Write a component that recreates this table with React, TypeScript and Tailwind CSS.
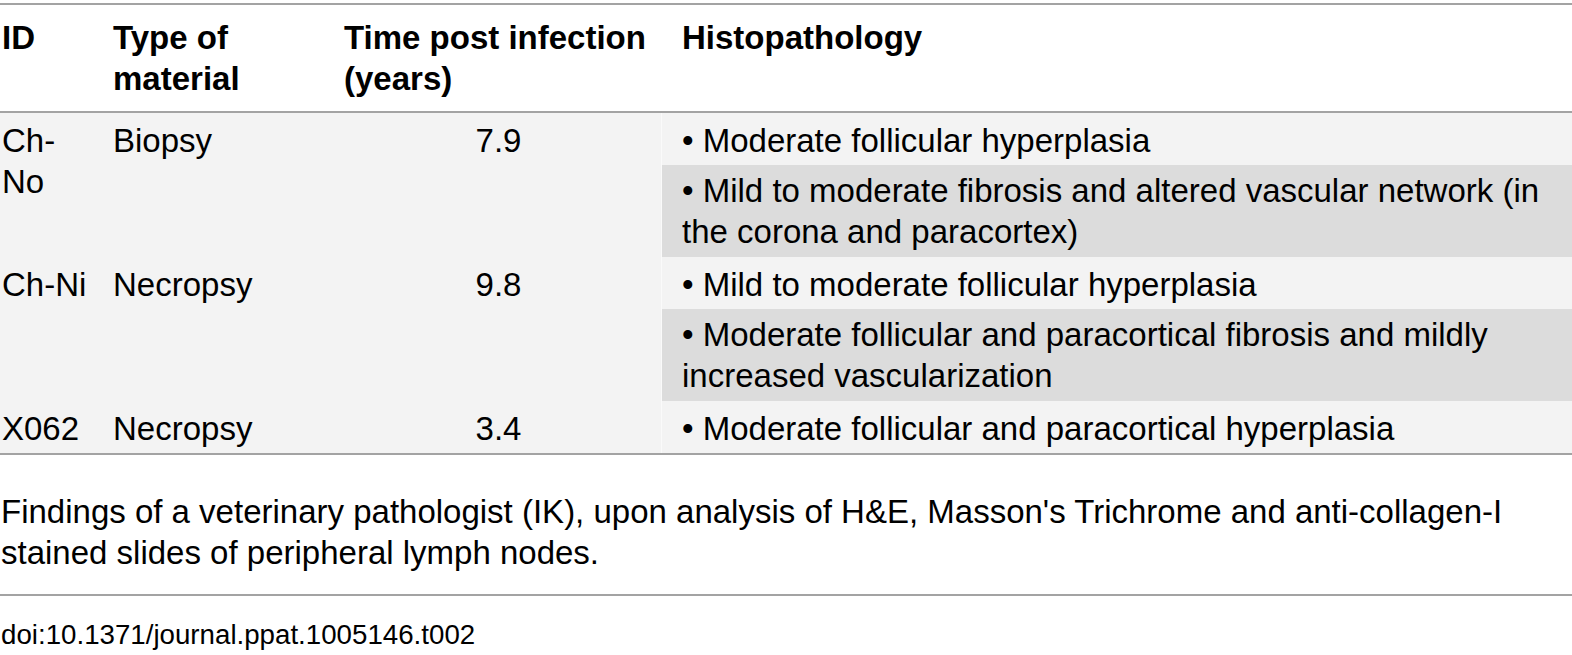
import React from "react";

const font = "font-['Liberation_Sans',Arial,Helvetica,sans-serif]";

function Row({
  id,
  type,
  time,
  items,
}: {
  id: string;
  type: string;
  time: string;
  items: string[];
}) {
  return (
    <div className="grid grid-cols-[105px_231px_325px_1fr] bg-[#f3f3f3]">
      <div className="pl-[2px] pr-[13px] pt-[7px] break-words">{id}</div>
      <div className="pl-[8px] pt-[7px]">{type}</div>
      <div className="pt-[7px] text-center">{time}</div>
      <div className="border-l border-[#fafafa]">
        {items.map((t, i) => (
          <div
            key={i}
            className={
              i % 2 === 0
                ? "pl-[20px] pr-[8px] pt-[7px] pb-[4px]"
                : "bg-[#dcdcdc] pl-[20px] pr-[8px] pt-[5px] pb-[5px]"
            }
          >
            {t}
          </div>
        ))}
      </div>
    </div>
  );
}

export default function App() {
  return (
    <div className={`${font} w-[1572px] h-[655px] bg-white text-black overflow-hidden pt-[3px]`}>
      <div className="border-t-2 border-b-2 border-[#a3a3a3] text-[33px] leading-[41px]">
        <div className="grid grid-cols-[105px_231px_325px_1fr] font-bold bg-white border-b-2 border-[#a3a3a3]">
          <div className="pl-[2px] pt-[12px] pb-[12px]">ID</div>
          <div className="pl-[8px] pt-[12px] pb-[12px]">Type of material</div>
          <div className="pl-[8px] pr-[8px] pt-[12px] pb-[12px]">Time post infection (years)</div>
          <div className="pl-[21px] pt-[12px] pb-[12px]">Histopathology</div>
        </div>
        <Row
          id="Ch-No"
          type="Biopsy"
          time="7.9"
          items={[
            "• Moderate follicular hyperplasia",
            "• Mild to moderate fibrosis and altered vascular network (in the corona and paracortex)",
          ]}
        />
        <Row
          id="Ch-Ni"
          type="Necropsy"
          time="9.8"
          items={[
            "• Mild to moderate follicular hyperplasia",
            "• Moderate follicular and paracortical fibrosis and mildly increased vascularization",
          ]}
        />
        <Row
          id="X062"
          type="Necropsy"
          time="3.4"
          items={["• Moderate follicular and paracortical hyperplasia"]}
        />
      </div>
      <p className="mt-[36px] text-[33px] leading-[41px] pl-[1px]">
        Findings of a veterinary pathologist (IK), upon analysis of H&amp;E, Masson's Trichrome and anti-collagen-I stained slides of peripheral lymph nodes.
      </p>
      <div className="mt-[21px] border-t-2 border-[#a3a3a3]" />
      <p className="mt-[23px] text-[27.7px] leading-[32px] pl-[1px]">doi:10.1371/journal.ppat.1005146.t002</p>
    </div>
  );
}
